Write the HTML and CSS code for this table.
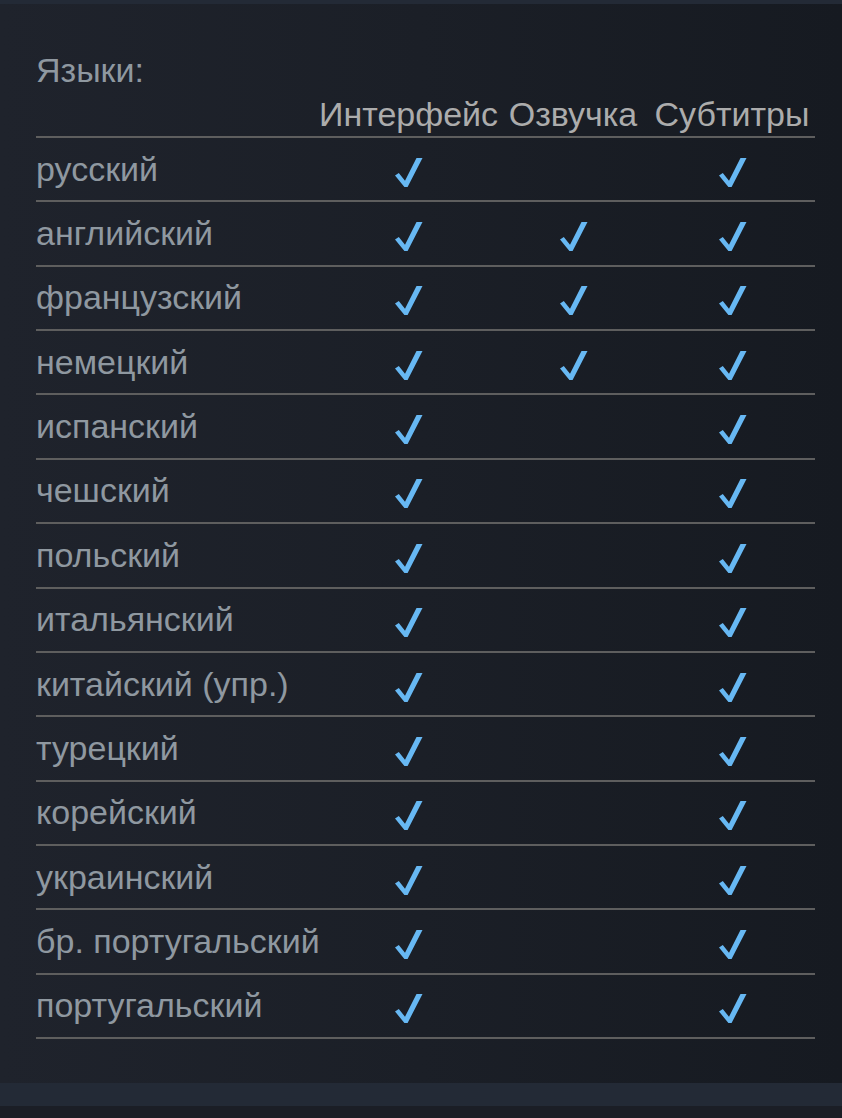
FILE: index.html
```html
<!DOCTYPE html>
<html lang="ru">
<head>
<meta charset="utf-8">
<title>Языки</title>
<link rel="stylesheet" href="styles.css">
</head>
<body>
<div class="topbar"></div>
<section class="panel">
  <h2 class="title">Языки:</h2>
  <table class="langs">
    <colgroup>
      <col class="c-name"><col class="c-ui"><col class="c-voice"><col class="c-sub">
    </colgroup>
    <thead>
      <tr><th></th><th>Интерфейс</th><th>Озвучка</th><th>Субтитры</th></tr>
    </thead>
    <tbody id="rows"></tbody>
  </table>
</section>
<div class="bottombar"></div>
<div class="footer"></div>
<script src="app.js"></script>
</body>
</html>
```

FILE: app.js
```js
const data = [
  ["русский", 1, 0, 1],
  ["английский", 1, 1, 1],
  ["французский", 1, 1, 1],
  ["немецкий", 1, 1, 1],
  ["испанский", 1, 0, 1],
  ["чешский", 1, 0, 1],
  ["польский", 1, 0, 1],
  ["итальянский", 1, 0, 1],
  ["китайский (упр.)", 1, 0, 1],
  ["турецкий", 1, 0, 1],
  ["корейский", 1, 0, 1],
  ["украинский", 1, 0, 1],
  ["бр. португальский", 1, 0, 1],
  ["португальский", 1, 0, 1]
];
const check = '<svg class="check" viewBox="0 0 30 32" width="30" height="32" aria-hidden="true"><path d="M2 19.5 L5.8 17 L12 24.8 L23.5 2 L29.5 2 L14.6 31 L11.4 31 Z"/></svg>';
const tbody = document.getElementById("rows");
tbody.innerHTML = data.map(r =>
  `<tr><td class="name">${r[0]}</td>` +
  [1, 2, 3].map(i => `<td class="mark">${r[i] ? check : ""}</td>`).join("") +
  `</tr>`
).join("");
```

FILE: styles.css
```css
html, body {
  margin: 0;
  padding: 0;
}
body {
  background: #1b1e26;
  font-family: "Liberation Sans", Arial, sans-serif;
  width: 842px;
  height: 1118px;
  overflow: hidden;
}
.topbar {
  height: 4px;
  background: #232a36;
}
.panel {
  height: 1079px;
  box-sizing: border-box;
  padding: 47px 27px 0 36px;
  background: linear-gradient(to right, #1f232c 0%, #1b1f27 50%, #161a21 100%);
}
.title {
  margin: 0;
  font-size: 34px;
  font-weight: normal;
  line-height: 39px;
  color: #8f98a0;
}
.langs {
  margin-top: 5px;
  width: 779px;
  border-collapse: separate;
  border-spacing: 0;
  table-layout: fixed;
  font-size: 34px;
  line-height: 39px;
}
.c-name { width: 283px; }
.c-ui { width: 178px; }
.c-voice { width: 152px; }
.c-sub { width: 166px; }
.langs th {
  padding: 0 0 2px 0;
  font-weight: normal;
  color: #acacac;
  text-align: center;
  white-space: nowrap;
  border-bottom: 2px solid #5e5e5e;
}
.langs td {
  padding: 0;
  height: 62.36px;
  vertical-align: middle;
  border-bottom: 2px solid #5e5e5e;
}
.langs td.name {
  color: #8f98a0;
  white-space: nowrap;
}
.langs td.mark {
  text-align: center;
  padding-top: 5px;
  height: 57.36px;
}
.check {
  display: block;
  margin: 0 auto;
  fill: #67b8f3;
}
.bottombar {
  height: 23px;
  background: #232a36;
}
.footer {
  height: 12px;
  background: #1b1e26;
}
```
